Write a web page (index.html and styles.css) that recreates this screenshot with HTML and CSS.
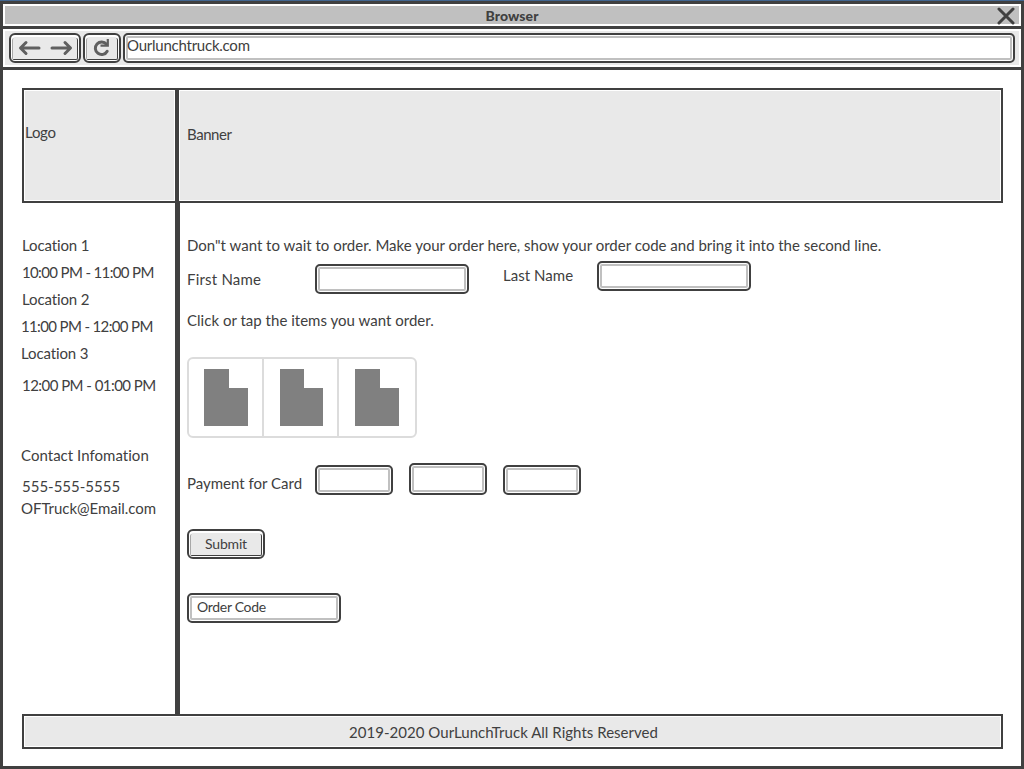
FILE: index.html
```html
<!DOCTYPE html>
<html lang="en">
<head>
<meta charset="utf-8">
<title>Browser</title>
<link rel="stylesheet" href="styles.css">
</head>
<body>
<div class="window">
  <header class="titlebar">
    <span class="title">Browser</span>
    <svg class="close" width="18" height="18" viewBox="0 0 18 18"><path d="M2 2L16 16M16 2L2 16"/></svg>
  </header>
  <nav class="toolbar">
    <div class="button nav-buttons">
      <svg width="64" height="22" viewBox="0 0 64 22"><path d="M26 11H8M13 5.5L7.5 11L13 16.5M39 11H57M52 5.5L57.5 11L52 16.5"/></svg>
    </div>
    <div class="button reload">
      <svg width="30" height="22" viewBox="0 0 30 22"><path d="M20.2 14.2A6.3 6.3 0 1 1 19.5 7.2"/><path class="tip" d="M20.8 2V8.6H13.5"/></svg>
    </div>
    <div class="field url"><span class="t-url">Ourlunchtruck.com</span></div>
  </nav>
  <div class="page">
    <section class="banner">
      <div class="logo"><span>Logo</span></div>
      <div class="banner-text"><span class="t-banner">Banner</span></div>
    </section>
    <div class="body">
      <aside class="sidebar">
        <p class="location">Location 1</p>
        <p class="time">10:00 PM - 11:00 PM</p>
        <p class="location">Location 2</p>
        <p class="time pull">11:00 PM - 12:00 PM</p>
        <p class="location pull third-location">Location 3</p>
        <p class="time last-time">12:00 PM - 01:00 PM</p>
        <p class="contact pull">Contact Infomation</p>
        <p class="phone">555-555-5555</p>
        <p class="email pull">OFTruck@Email.com</p>
      </aside>
      <main class="order">
        <p>Don"t want to wait to order. Make your order here, show your order code and bring it into the second line.</p>
        <div class="names">
          <label class="first">First Name</label>
          <div class="field wide low"></div>
          <label class="last">Last Name</label>
          <div class="field wide"></div>
        </div>
        <p class="hint">Click or tap the items you want order.</p>
        <div class="items">
          <div class="item"><svg width="44" height="57" viewBox="0 0 44 57"><path d="M0 0H25V19H44V57H0Z"/></svg></div>
          <div class="item second"><svg width="43" height="57" viewBox="0 0 43 57"><path d="M0 0H24V19H43V57H0Z"/></svg></div>
          <div class="item third"><svg width="44" height="57" viewBox="0 0 44 57"><path d="M0 0H25V19H44V57H0Z"/></svg></div>
        </div>
        <div class="payment">
          <label>Payment for Card</label>
          <div class="field small low"></div>
          <div class="field small tall"></div>
          <div class="field small low"></div>
        </div>
        <div class="button submit"><span>Submit</span></div>
        <div class="field wide code"><span>Order Code</span></div>
      </main>
    </div>
    <footer class="footer"><span>2019-2020 OurLunchTruck All Rights Reserved</span></footer>
  </div>
</div>
</body>
</html>
```

FILE: styles.css
```css
*, *::before, *::after { box-sizing: border-box; }
body { margin: 0; font: 15px/20px Lato, "Open Sans", sans-serif; color: #404040; }
p { margin: 0; white-space: nowrap; }
span, label { white-space: nowrap; }
svg { display: block; fill: none; }

.window {
  width: 1024px; height: 769px;
  border: 3px solid #404040; border-top: 0;
  background: #fff; display: flex; flex-direction: column;
}
.window::before { content: ""; height: 4px; margin: 0 -3px; background: #404040; border-top: 1px solid #41658f; flex: none; }

.titlebar {
  height: 25px; flex: none; display: grid; grid-template-columns: 1fr; align-items: center;
  border: 2px solid #fff; border-bottom: 0;
  background: linear-gradient(#c0c0c0 18px, #fff 18px 20px, #404040 20px);
  position: relative;
}
.titlebar::after { content: ""; position: absolute; left: -2px; right: -2px; bottom: 0; height: 3px; background: #404040; }
.title { grid-area: 1 / 1; justify-self: center; font-size: 14px; font-weight: 900; letter-spacing: 0.1px; margin-top: -3px; }
.close { grid-area: 1 / 1; justify-self: end; margin: -4px 4px 0 0; stroke: #404040; stroke-width: 3; stroke-linecap: round; }

.toolbar {
  height: 38px; flex: none; display: flex; gap: 2px; padding: 2px 4px;
  border: 2px solid #fff; background: #e9e9e9;
}
.page { border-top: 3px solid #404040; flex: 1; padding: 18px 18px 17px 19px; display: flex; flex-direction: column; }

.button {
  height: 30px; border: 2px solid #404040; border-radius: 6px; background: #e9e9e9;
  box-shadow: inset 0 0 0 2px #fff;
  display: flex; align-items: center; justify-content: center; position: relative;
}
.button::after {
  content: ""; position: absolute; inset: 3px 1px 1px 1px;
  border: 1px solid #404040; border-top: 0; border-left-color: #a8a8a8; border-radius: 2px;
}
.button svg { stroke: #606060; stroke-width: 3; stroke-linecap: round; stroke-linejoin: round; }
.nav-buttons { width: 72px; }
.reload { width: 38px; }
.reload .tip { stroke-width: 2.2; stroke-linecap: butt; stroke-linejoin: miter; }

.field {
  height: 30px; border: 2px solid #404040; border-radius: 5px; background: #fff;
  box-shadow: inset 0 0 0 1px #fff, inset 0 0 0 3px #c0c0c0;
}
.url { flex: 1; padding-left: 2px; }
.t-url { letter-spacing: -0.24px; }

.banner { height: 115px; flex: none; display: flex; border: 2px solid #404040; }
.logo, .banner-text { background: #e9e9e9; border: 1px solid #fff; }
.logo { width: 151px; padding-top: 31px; box-shadow: 4px 0 0 #404040; letter-spacing: -0.27px; }
.banner-text { flex: 1; margin-left: 4px; padding: 33px 0 0 7px; }
.t-banner { letter-spacing: -0.43px; }

.body { flex: 1; display: flex; }
.sidebar { width: 158px; border-right: 5px solid #404040; padding-top: 32px; }
.sidebar p { margin-bottom: 7px; }
.sidebar .pull { margin-left: -1px; }
.location { letter-spacing: -0.12px; }
.time { letter-spacing: -0.64px; }
.sidebar .third-location { margin-bottom: 12px; }
.sidebar .last-time { margin-bottom: 50px; letter-spacing: -0.54px; }
.sidebar .contact { margin-bottom: 11px; letter-spacing: 0.03px; }
.sidebar .phone { margin-bottom: 2px; }
.email { letter-spacing: -0.04px; }

.order { flex: 1; padding: 32px 0 0 7px; }
.names { display: flex; margin-top: 6px; height: 33px; }
.wide { width: 154px; }
.names .low { margin-top: 3px; }
.first { width: 128px; padding-top: 8px; letter-spacing: 0.2px; }
.last { width: 128px; padding: 4px 0 0 34px; letter-spacing: 0.03px; }
.hint { margin-top: 16px; letter-spacing: 0.02px; }
.items {
  margin-top: 27px; width: 230px; height: 81px; display: flex;
  border: 2px solid #dcdcdc; border-radius: 6px;
}
.item { width: 75px; padding: 10px 0 0 15px; border-right: 2px solid #dcdcdc; }
.item svg { fill: #808080; }
.item.second { padding-left: 16px; }
.item.third { padding-left: 16px; border-right: 0; }
.payment { display: flex; height: 32px; margin-top: 25px; }
.payment label { width: 128px; padding-top: 10px; }
.small { width: 78px; margin-right: 16px; }
.payment .low { margin-top: 2px; }
.tall { height: 32px; }
.submit { width: 78px; margin-top: 34px; font-size: 14px; letter-spacing: -0.2px; }
.code { margin-top: 34px; padding: 2px 0 0 8px; font-size: 14px; letter-spacing: -0.3px; }

.footer {
  height: 35px; flex: none; border: 2px solid #404040; background: #e9e9e9;
  box-shadow: inset 0 0 0 1px #fff; padding: 6px 0 0 325px; letter-spacing: 0.03px;
}
```
